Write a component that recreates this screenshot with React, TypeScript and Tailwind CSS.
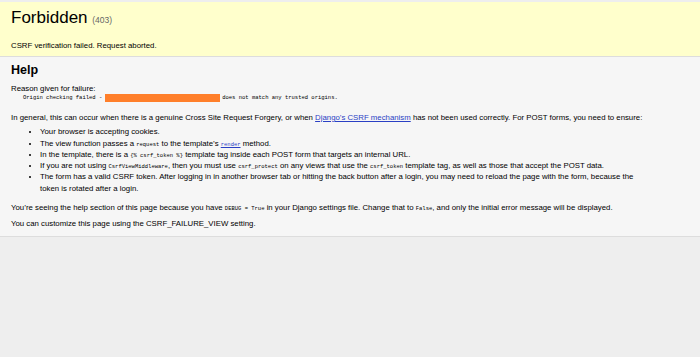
const Code = ({ children }: { children: React.ReactNode }) => (
  <code className="font-['Liberation_Mono',monospace] text-[5.5px] leading-none">{children}</code>
)

export default function App() {
  return (
    <div className="min-h-[357px] bg-[#eee] pt-[2px] font-['Liberation_Sans',Arial,sans-serif] text-black">
      <div className="h-[55px] border-b border-[#ddd] bg-[#ffc] px-[11px]">
        <h1 className="pt-[6px] text-[17px] font-normal leading-[20px]">
          Forbidden <span className="text-[8.5px] text-[#666]">(403)</span>
        </h1>
        <p className="mt-[11px] text-[7.8px] leading-[10px]">CSRF verification failed. Request aborted.</p>
      </div>

      <div className="h-[180px] border-b border-[#ddd] bg-[#f6f6f6] px-[11px] text-[7.8px] leading-[11.25px]">
        <h2 className="pt-[5px] text-[12.5px] font-bold leading-[16px]">Help</h2>
        <p className="mt-[6px] leading-[9px]">Reason given for failure:</p>
        <pre className="ml-[12px] flex items-center font-['Liberation_Mono',monospace] text-[5.5px] leading-[9px]">
          Origin checking failed -<span className="ml-[3px] mr-[2px] inline-block h-[8px] w-[115px] bg-[#ff7f2a]" />does not match any trusted origins.
        </pre>
        <p className="mt-[10px]">
          In general, this can occur when there is a genuine Cross Site Request Forgery, or when{' '}
          <a className="text-[#2a3fc4] underline">Django’s CSRF mechanism</a> has not been used correctly. For POST forms, you need to ensure:
        </p>
        <ul className="mx-[29px] mt-[3px] list-disc pr-[24px]">
          <li>Your browser is accepting cookies.</li>
          <li>
            The view function passes a <Code>request</Code> to the template’s{' '}
            <a className="text-[#2a3fc4] underline"><Code>render</Code></a> method.
          </li>
          <li>
            In the template, there is a <Code>{'{% csrf_token %}'}</Code> template tag inside each POST form that targets an internal URL.
          </li>
          <li>
            If you are not using <Code>CsrfViewMiddleware</Code>, then you must use <Code>csrf_protect</Code> on any views that use the{' '}
            <Code>csrf_token</Code> template tag, as well as those that accept the POST data.
          </li>
          <li>
            The form has a valid CSRF token. After logging in in another browser tab or hitting the back button after a login, you may need to reload the page with the form, because the token is rotated after a login.
          </li>
        </ul>
        <p className="mt-[8px]">
          You’re seeing the help section of this page because you have <Code>DEBUG = True</Code> in your Django settings file. Change that to{' '}
          <Code>False</Code>, and only the initial error message will be displayed.
        </p>
        <p className="mt-[5px]">You can customize this page using the CSRF_FAILURE_VIEW setting.</p>
      </div>
    </div>
  )
}
